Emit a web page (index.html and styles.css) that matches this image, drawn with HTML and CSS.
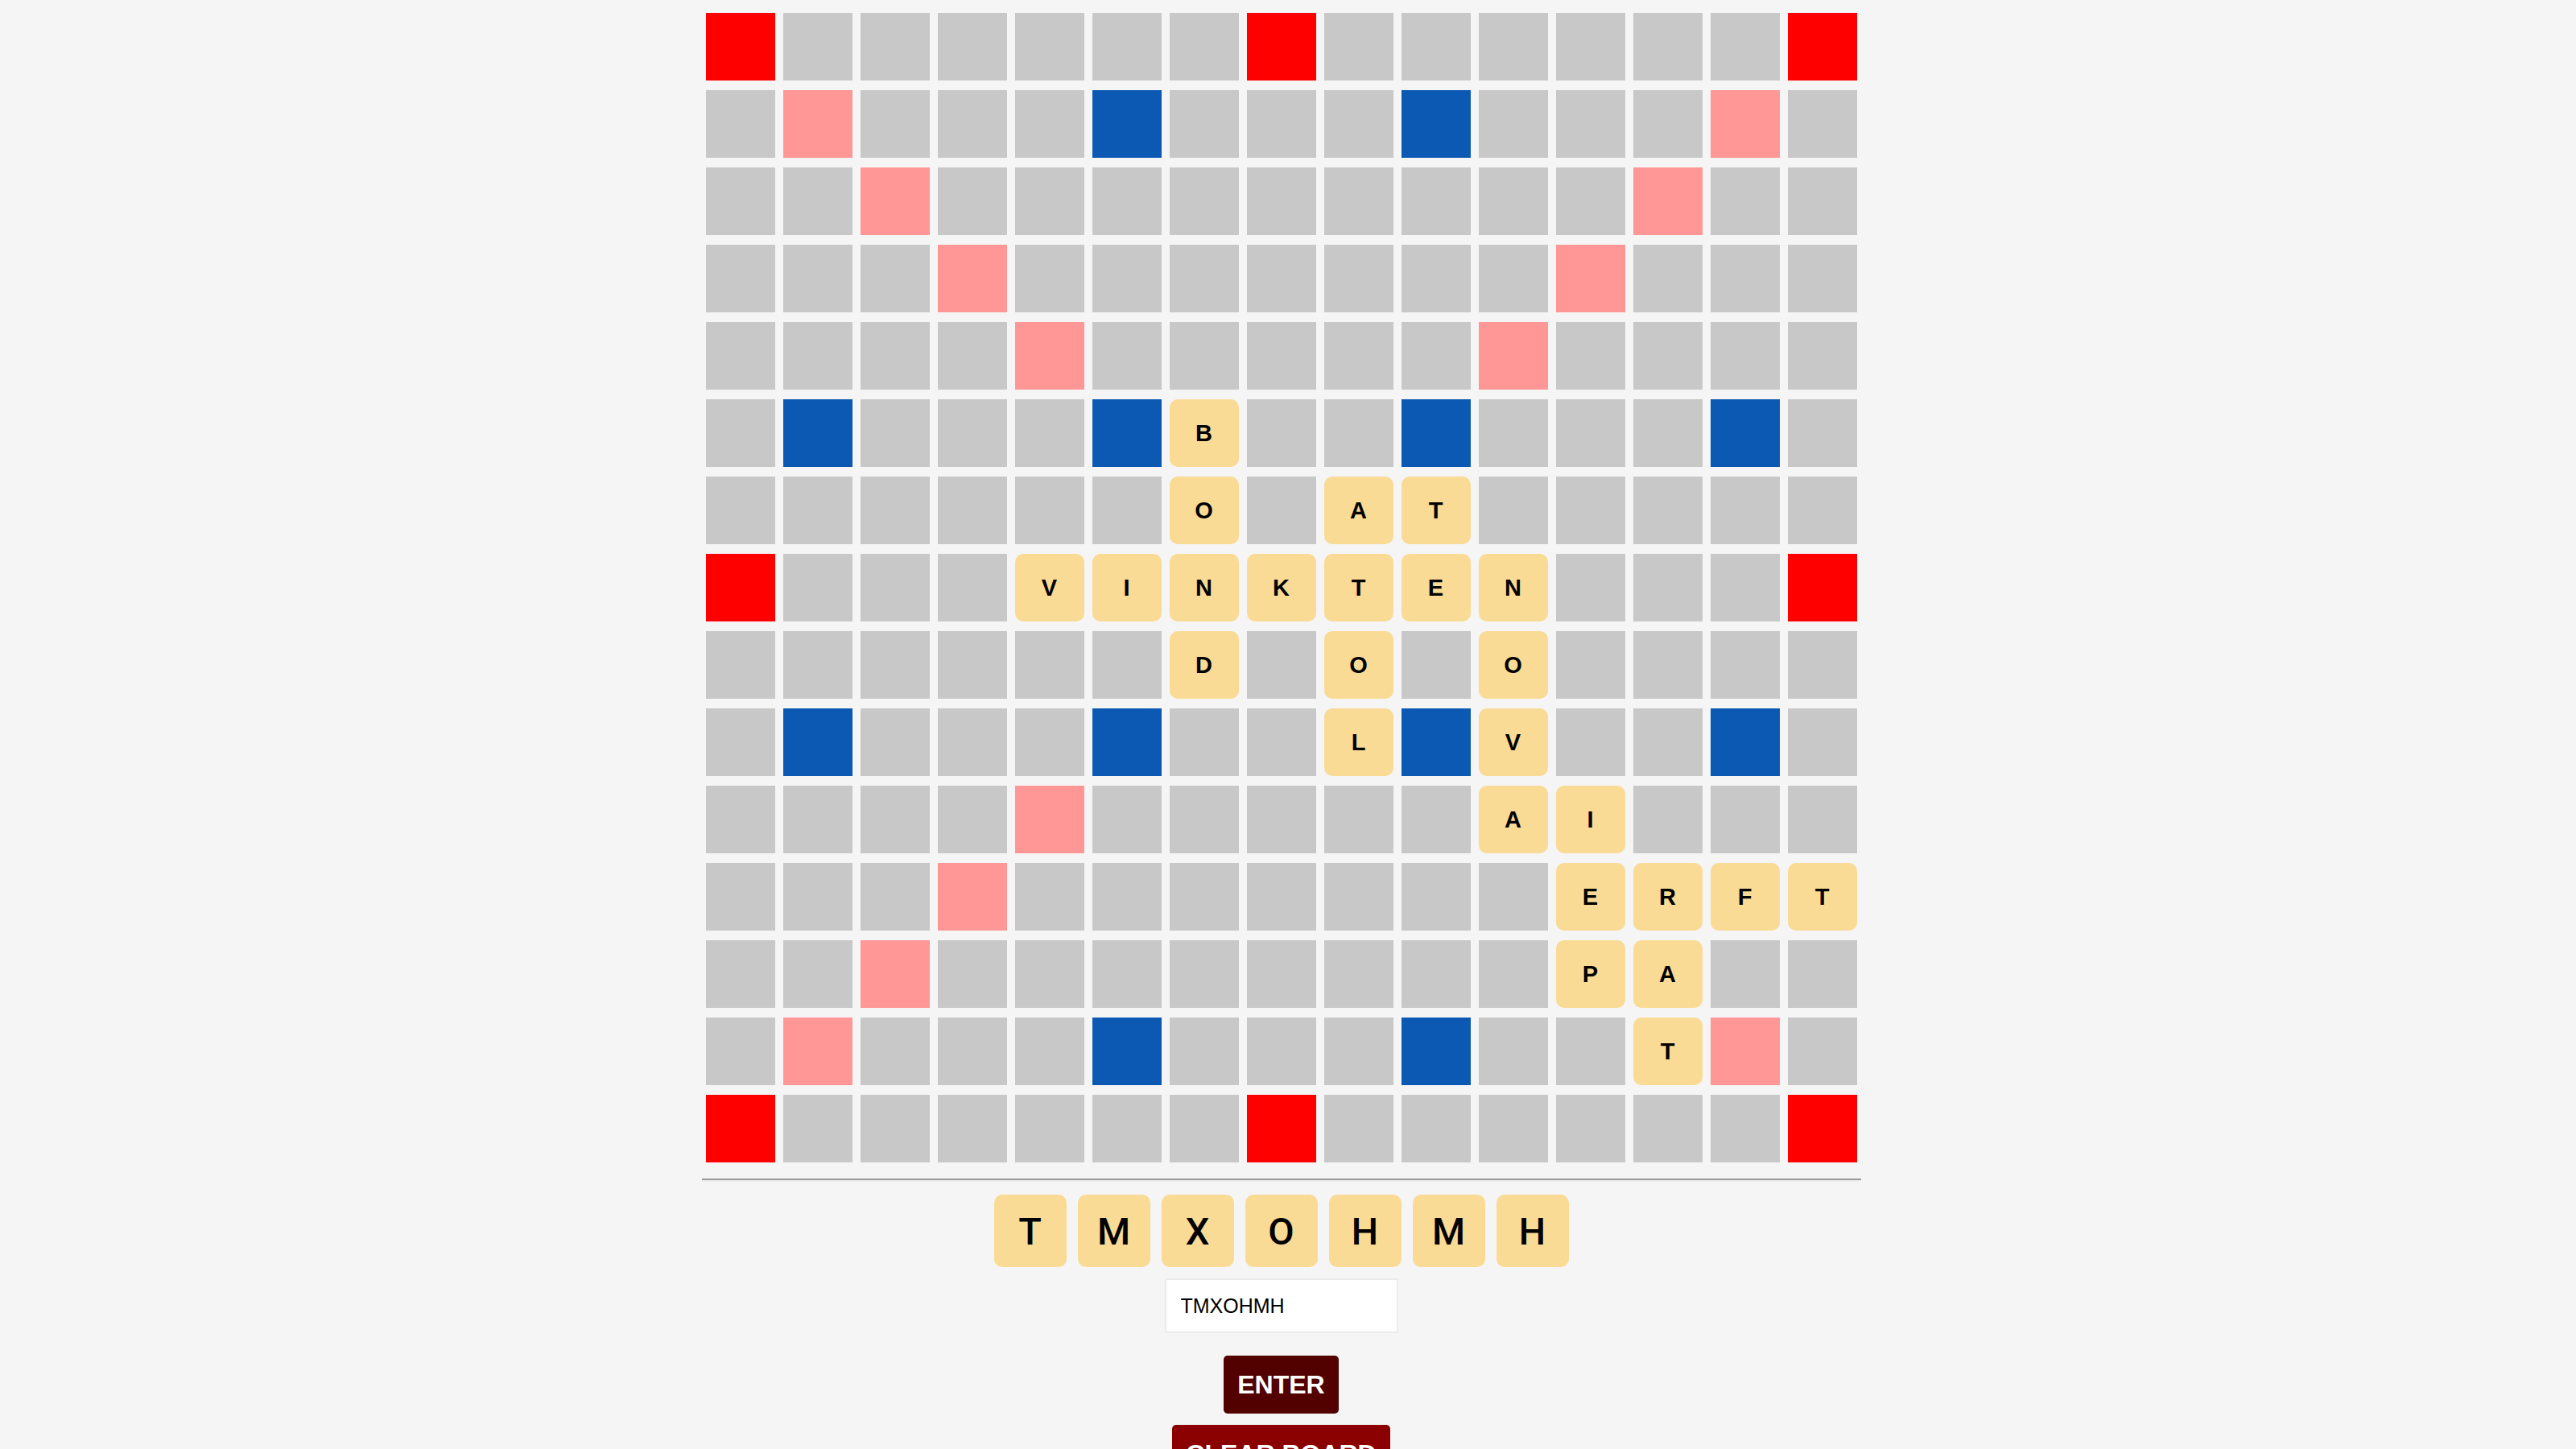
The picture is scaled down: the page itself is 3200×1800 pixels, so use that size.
FILE: index.html
```html
<!doctype html>
<html>
	<head>
	    <meta charset="utf-8"/>
	    <title>Scrabble</title>
		<link rel="stylesheet" href="styles.css">
	</head>
	<body>

	   <div id="game">

	       <div id="board">
	           <div class="sq tw"></div><div class="sq"></div><div class="sq"></div><div class="sq"></div><div class="sq"></div><div class="sq"></div><div class="sq"></div><div class="sq tw"></div><div class="sq"></div><div class="sq"></div><div class="sq"></div><div class="sq"></div><div class="sq"></div><div class="sq"></div><div class="sq tw"></div>
	           <div class="sq"></div><div class="sq dw"></div><div class="sq"></div><div class="sq"></div><div class="sq"></div><div class="sq tl"></div><div class="sq"></div><div class="sq"></div><div class="sq"></div><div class="sq tl"></div><div class="sq"></div><div class="sq"></div><div class="sq"></div><div class="sq dw"></div><div class="sq"></div>
	           <div class="sq"></div><div class="sq"></div><div class="sq dw"></div><div class="sq"></div><div class="sq"></div><div class="sq"></div><div class="sq"></div><div class="sq"></div><div class="sq"></div><div class="sq"></div><div class="sq"></div><div class="sq"></div><div class="sq dw"></div><div class="sq"></div><div class="sq"></div>
	           <div class="sq"></div><div class="sq"></div><div class="sq"></div><div class="sq dw"></div><div class="sq"></div><div class="sq"></div><div class="sq"></div><div class="sq"></div><div class="sq"></div><div class="sq"></div><div class="sq"></div><div class="sq dw"></div><div class="sq"></div><div class="sq"></div><div class="sq"></div>
	           <div class="sq"></div><div class="sq"></div><div class="sq"></div><div class="sq"></div><div class="sq dw"></div><div class="sq"></div><div class="sq"></div><div class="sq"></div><div class="sq"></div><div class="sq"></div><div class="sq dw"></div><div class="sq"></div><div class="sq"></div><div class="sq"></div><div class="sq"></div>
	           <div class="sq"></div><div class="sq tl"></div><div class="sq"></div><div class="sq"></div><div class="sq"></div><div class="sq tl"></div><div class="sq tile">B</div><div class="sq"></div><div class="sq"></div><div class="sq tl"></div><div class="sq"></div><div class="sq"></div><div class="sq"></div><div class="sq tl"></div><div class="sq"></div>
	           <div class="sq"></div><div class="sq"></div><div class="sq"></div><div class="sq"></div><div class="sq"></div><div class="sq"></div><div class="sq tile">O</div><div class="sq"></div><div class="sq tile">A</div><div class="sq tile">T</div><div class="sq"></div><div class="sq"></div><div class="sq"></div><div class="sq"></div><div class="sq"></div>
	           <div class="sq tw"></div><div class="sq"></div><div class="sq"></div><div class="sq"></div><div class="sq tile">V</div><div class="sq tile">I</div><div class="sq tile">N</div><div class="sq tile">K</div><div class="sq tile">T</div><div class="sq tile">E</div><div class="sq tile">N</div><div class="sq"></div><div class="sq"></div><div class="sq"></div><div class="sq tw"></div>
	           <div class="sq"></div><div class="sq"></div><div class="sq"></div><div class="sq"></div><div class="sq"></div><div class="sq"></div><div class="sq tile">D</div><div class="sq"></div><div class="sq tile">O</div><div class="sq"></div><div class="sq tile">O</div><div class="sq"></div><div class="sq"></div><div class="sq"></div><div class="sq"></div>
	           <div class="sq"></div><div class="sq tl"></div><div class="sq"></div><div class="sq"></div><div class="sq"></div><div class="sq tl"></div><div class="sq"></div><div class="sq"></div><div class="sq tile">L</div><div class="sq tl"></div><div class="sq tile">V</div><div class="sq"></div><div class="sq"></div><div class="sq tl"></div><div class="sq"></div>
	           <div class="sq"></div><div class="sq"></div><div class="sq"></div><div class="sq"></div><div class="sq dw"></div><div class="sq"></div><div class="sq"></div><div class="sq"></div><div class="sq"></div><div class="sq"></div><div class="sq tile">A</div><div class="sq tile">I</div><div class="sq"></div><div class="sq"></div><div class="sq"></div>
	           <div class="sq"></div><div class="sq"></div><div class="sq"></div><div class="sq dw"></div><div class="sq"></div><div class="sq"></div><div class="sq"></div><div class="sq"></div><div class="sq"></div><div class="sq"></div><div class="sq"></div><div class="sq tile">E</div><div class="sq tile">R</div><div class="sq tile">F</div><div class="sq tile">T</div>
	           <div class="sq"></div><div class="sq"></div><div class="sq dw"></div><div class="sq"></div><div class="sq"></div><div class="sq"></div><div class="sq"></div><div class="sq"></div><div class="sq"></div><div class="sq"></div><div class="sq"></div><div class="sq tile">P</div><div class="sq tile">A</div><div class="sq"></div><div class="sq"></div>
	           <div class="sq"></div><div class="sq dw"></div><div class="sq"></div><div class="sq"></div><div class="sq"></div><div class="sq tl"></div><div class="sq"></div><div class="sq"></div><div class="sq"></div><div class="sq tl"></div><div class="sq"></div><div class="sq"></div><div class="sq tile">T</div><div class="sq dw"></div><div class="sq"></div>
	           <div class="sq tw"></div><div class="sq"></div><div class="sq"></div><div class="sq"></div><div class="sq"></div><div class="sq"></div><div class="sq"></div><div class="sq tw"></div><div class="sq"></div><div class="sq"></div><div class="sq"></div><div class="sq"></div><div class="sq"></div><div class="sq"></div><div class="sq tw"></div>
	       </div>

	       <hr class="divider"/>

	       <div id="rack">
	           <div class="rack-tile">T</div>
	           <div class="rack-tile">M</div>
	           <div class="rack-tile">X</div>
	           <div class="rack-tile">O</div>
	           <div class="rack-tile">H</div>
	           <div class="rack-tile">M</div>
	           <div class="rack-tile">H</div>
	       </div>

	       <form id="controls" method="post" onsubmit="return false">
	           <input type="text" name="word" id="word" value="TMXOHMH"/>
	           <button type="submit" class="btn enter">ENTER</button>
	           <button type="button" class="btn clear">CLEAR BOARD</button>
	       </form>

	   </div>

	</body>
</html>
```

FILE: styles.css
```css
body{
    margin: 0;
    padding-right: 17px;
    background: #f5f5f5;
    font-family: "Liberation Sans", Arial, sans-serif;
}

#game{
    width: 1440px;
    margin: 0 auto;
    padding-top: 10px;
}

#board{
    display: grid;
    grid-template-columns: repeat(15, 86px);
    grid-auto-rows: 84px;
    column-gap: 10px;
    row-gap: 12px;
    padding: 6px 5px;
}

.sq{
    background: #c8c8c8;
}
.sq.tw{
    background: #ff0000;
}
.sq.dw{
    background: #ff9797;
}
.sq.tl{
    background: #0b59b3;
}
.sq.tile{
    background: #fadb95;
    border-radius: 10px;
    display: flex;
    align-items: center;
    justify-content: center;
    font-weight: bold;
    font-size: 29px;
    color: #000;
}

.divider{
    margin: 14px 0 0 0;
    height: 0;
    border: 0;
    border-top: 2px solid #9a9a9a;
    border-bottom: 2px solid #ebebeb;
}

#rack{
    display: flex;
    justify-content: center;
    gap: 14px;
    margin-top: 16px;
}
.rack-tile{
    width: 90px;
    height: 90px;
    background: #fadb95;
    border-radius: 10px;
    display: flex;
    align-items: center;
    justify-content: center;
    font-family: Roboto, sans-serif;
    font-weight: 500;
    font-size: 47px;
    color: #000;
}

#controls{
    display: flex;
    flex-direction: column;
    align-items: center;
    margin-top: 14px;
}

#word{
    box-sizing: border-box;
    width: 290px;
    height: 68px;
    border: 2px solid #ebebeb;
    background: #fff;
    padding: 0 18px;
    font-family: "Liberation Sans", Arial, sans-serif;
    font-size: 25px;
    color: #000;
    outline: none;
}

.btn{
    height: 72px;
    padding: 0 17px;
    border: none;
    border-radius: 5px;
    color: #fff;
    font-family: "Liberation Sans", Arial, sans-serif;
    font-weight: bold;
    font-size: 32px;
}
.btn.enter{
    margin-top: 28px;
    background: #520000;
}
.btn.clear{
    margin-top: 14px;
    background: #8b0000;
}
```
